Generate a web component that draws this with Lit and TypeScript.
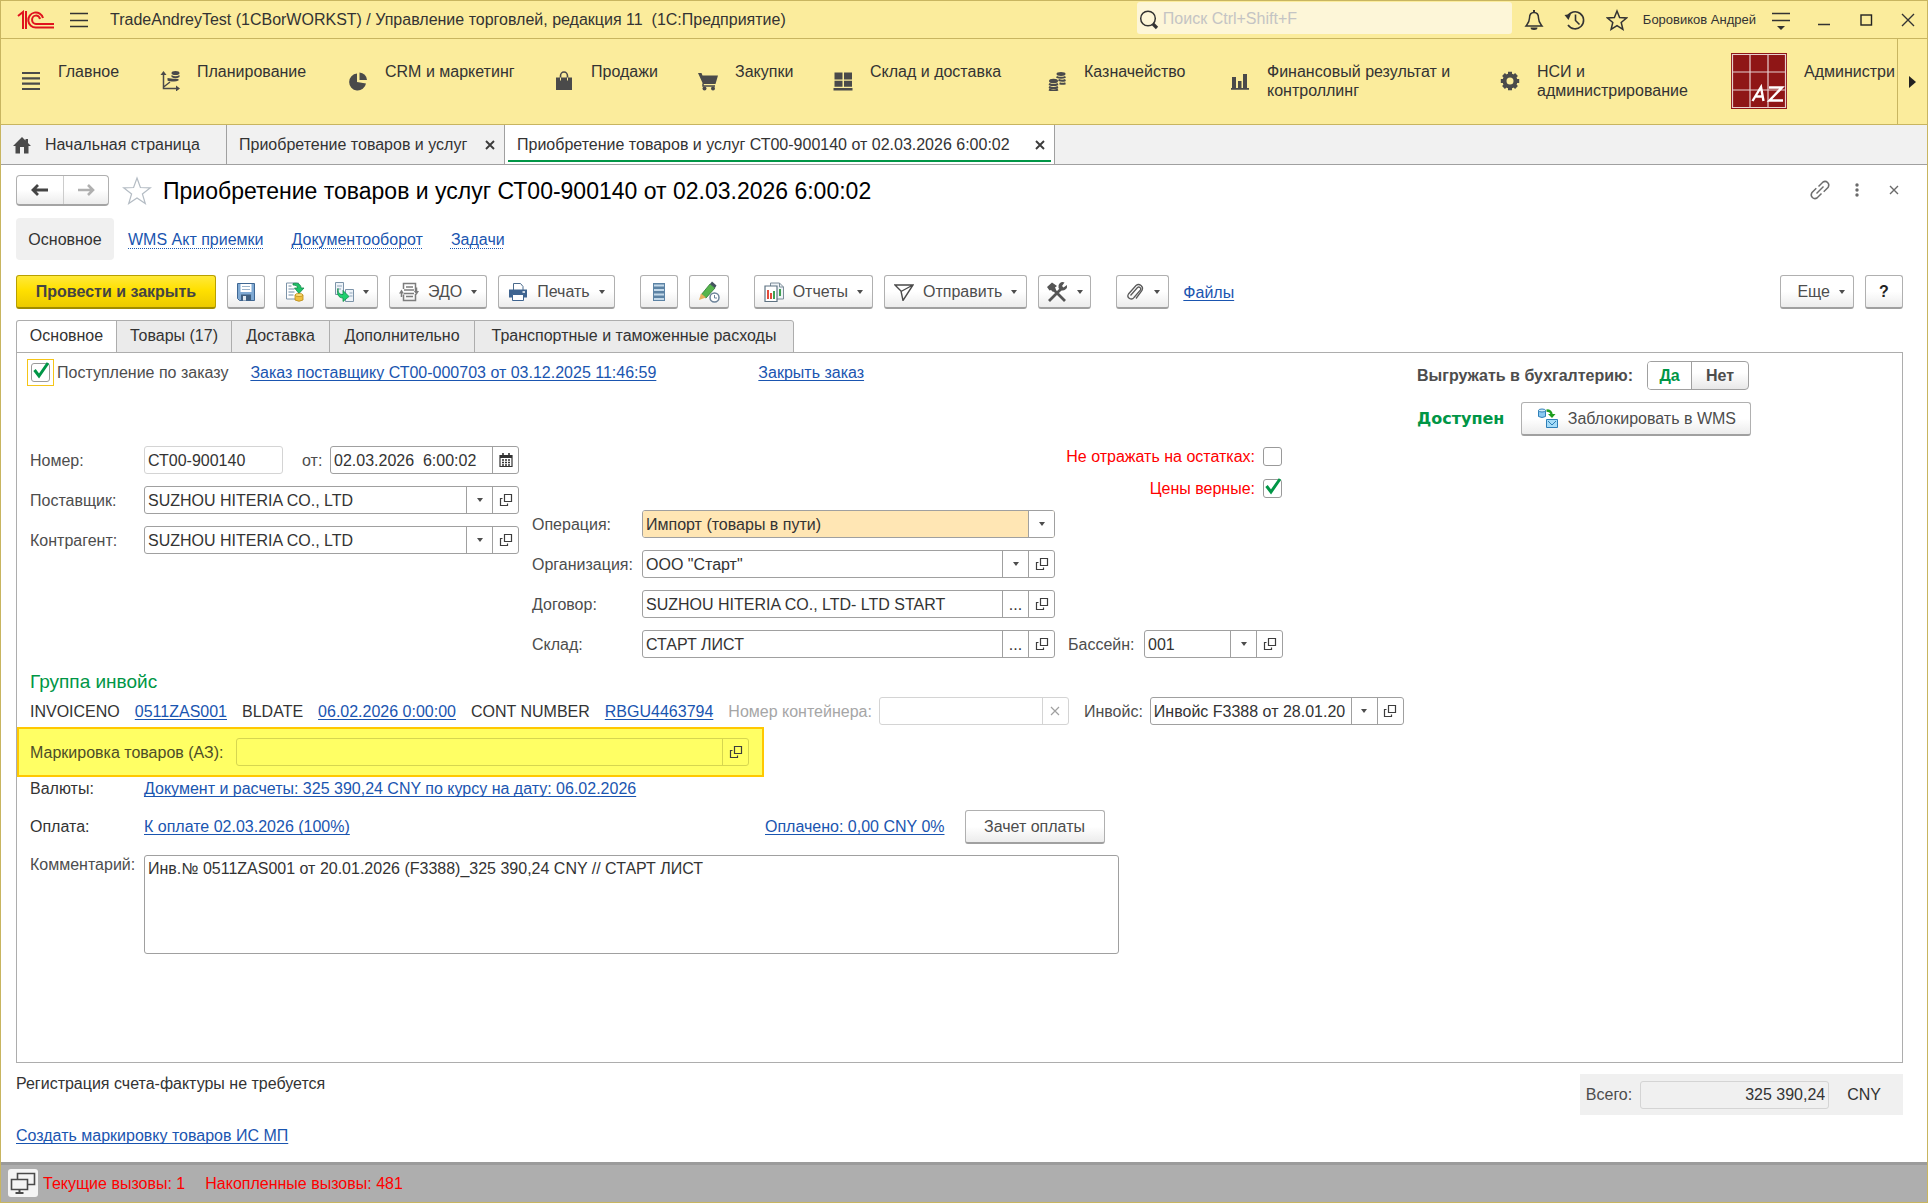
import { LitElement, html, css, svg, nothing } from "lit";
import { customElement, state } from "lit/decorators.js";
import { classMap } from "lit/directives/class-map.js";

const icon = (w: number, h: number, body: unknown) =>
  html`<svg class="icon" width=${w} height=${h} viewBox="0 0 ${w} ${h}" fill="none" aria-hidden="true">${body}</svg>`;

const INK = "#4a4a4a";

const icons = {
  logo: icon(38, 20, svg`<g stroke="#e0141e" stroke-width="2"><path d="M1 6L6 2V19"/><path d="M9 1V19"/><path d="M26 8A7.500 7.500 0 1 0 19 17.500H37"/><path d="M23 9A4 4.200 0 1 0 19 14H37"/></g>`),
  burger: icon(20, 18, svg`<path d="M1 2.500H19M1 9.500H19M1 15.500H19" stroke="#333" stroke-width="1.500"/>`),
  search: icon(22, 22, svg`<circle cx="10" cy="9.500" r="7.300" stroke="#333" stroke-width="1.500"/><path d="M15 15L19 19" stroke="#333" stroke-width="3.200"/>`),
  bell: icon(20, 22, svg`<path d="M10 3.500c-3.500 0-4.500 2.500-4.500 5.500 0 4-1.500 5.500-3.500 8h16c-2-2.500-3.500-4-3.500-8 0-3-1-5.500-4.500-5.500z" stroke="#333" stroke-width="1.500"/><path d="M10 1v3" stroke="#333" stroke-width="2"/><path d="M6.500 18.500h7a3.500 2.500 0 0 1-7 0z" fill="#333"/>`),
  history: icon(22, 22, svg`<path d="M3.500 7.500A8.500 8.500 0 1 1 4 16" stroke="#333" stroke-width="1.600"/><path d="M11.500 5.500v6l4 4" stroke="#333" stroke-width="1.600"/><path d="M0.500 6l6.500-1-2.500 6z" fill="#333"/>`),
  star: icon(22, 22, svg`<path d="M11 2l2.600 6.500 6.900.5-5.300 4.500 1.700 6.800L11 16.600 5.100 20.300l1.700-6.800L1.500 9l6.900-.5z" stroke="#333" stroke-width="1.500"/>`),
  bigStar: icon(30, 30, svg`<path d="M15 2l3.400 9.500 10 .3-8 6.100 2.900 9.700L15 21.900l-8.300 5.700 2.900-9.700-8-6.100 10-.3z" stroke="#b4bcc4" stroke-width="1.200"/>`),
  service: icon(20, 22, svg`<path d="M1 4.500H19M1 11.500H19" stroke="#333" stroke-width="1.600"/><path d="M6 17h8l-4 4z" fill="#333"/>`),
  minimize: icon(16, 16, svg`<path d="M2 12.500H14" stroke="#333" stroke-width="1.500"/>`),
  maximize: icon(16, 16, svg`<rect x="3" y="3" width="10.500" height="10" stroke="#222" stroke-width="1.400"/>`),
  close: icon(16, 16, svg`<path d="M2 2L14 14M14 2L2 14" stroke="#333" stroke-width="1.400"/>`),
  list: icon(20, 20, svg`<path d="M1 2H19M1 7.300H19M1 12.700H19M1 18H19" stroke=${INK} stroke-width="2.200"/>`),
  plan: icon(20, 20, svg`<path d="M3.500 2V17.500H18M3 16.500L10 11" stroke=${INK} stroke-width="1.500"/><path d="M.5 4L3.500 0l3 4zM16 14.500l4 3-4 3z" fill=${INK}/><ellipse cx="15.500" cy="2" rx="4" ry="2" fill=${INK}/><path d="M11.500 4q4 2.500 8 0v2q-4 2.500-8 0zM7.500 7q5 1 11 1v1.500q-2 1-4.500 1-5 0-6.500-1z" fill=${INK}/>`),
  pie: icon(20, 20, svg`<path d="M9 2.500V11l9 1.500A8.500 8.500 0 1 1 9 2.500z" fill=${INK}/><path d="M11.500 1.500A8 8 0 0 1 19 9h-7.500z" fill=${INK}/>`),
  bag: icon(20, 20, svg`<path d="M2 6.500h16V19H2z" fill=${INK}/><path d="M6.500 9V5a3.500 4 0 0 1 7 0v4" stroke=${INK} stroke-width="1.600"/><path d="M6.500 6.500v3M13.500 6.500v3" stroke="#fbec9c" stroke-width="1"/>`),
  cart: icon(20, 20, svg`<path d="M0 2h3.500l1 2.500H20L17.500 13H5z" fill=${INK}/><path d="M5 12.500v2.500h12" stroke=${INK} stroke-width="1.500"/><circle cx="6.500" cy="17.500" r="2" fill=${INK}/><circle cx="15" cy="17.500" r="2" fill=${INK}/>`),
  stock: icon(20, 20, svg`<path d="M1.500 1.500h8v7h-8zM11 1.500h8v7h-8zM1.500 9.800h8v6h-8zM11 9.800h8v6h-8zM.5 17h19v2.500H.5z" fill=${INK}/>`),
  coins: icon(20, 20, svg`<g fill=${INK}><ellipse cx="14" cy="3" rx="4.500" ry="1.900"/><ellipse cx="6.500" cy="10" rx="4.500" ry="2.200"/></g><g stroke=${INK} stroke-width="2"><path d="M9.500 5.800q4.500 2 9 0M11.500 9q4 1.500 7 0M12.500 12.200q3 1.200 6 0M2 13q4.500 2.200 9 0M2 16q4.500 2.200 9 0M2 18.500q4.500 2.200 9 0"/></g>`),
  bars: icon(20, 20, svg`<path d="M2 6h4v11H2zM8 10h3.500v7H8zM13 3h4v14h-4zM1 17h18v1.800H1z" fill=${INK}/>`),
  gear: icon(20, 20, svg`<circle cx="10" cy="10" r="5.500" stroke=${INK} stroke-width="4"/><g stroke=${INK} stroke-width="4"><path d="M10 .8V4M10 16v3.200M.8 10H4M16 10h3.200M3.500 3.500l2 2M14.500 14.500l2 2M16.500 3.500l-2 2M5.500 14.500l-2 2"/></g>`),
  az: html`<svg class="icon" width="56" height="56" viewBox="0 0 56 56" aria-hidden="true"><rect width="56" height="56" fill="#8f1616"/><path d="M1.500 1.500h53v53h-53zM19 2v52M37 2v52M2 19h52M2 37h52" fill="none" stroke="#e8cfcf" stroke-width="1.200"/><path d="M21.500 48L30 34l2.500 14M25 43.500h7.500M38 34.500h13L38.500 47.500H52" fill="none" stroke="#fff" stroke-width="2.400"/></svg>`,
  home: icon(20, 18, svg`<path d="M10 1L1 10h2.500v7.500h4.500V11h4v6.500h4.500V10H19l-3-3V3h-2.500v1.500z" fill=${INK}/>`),
  cross: icon(12, 12, svg`<path d="M2 2l8 8M10 2l-8 8" stroke="#3c3c3c" stroke-width="1.900"/>`),
  thinCross: icon(12, 12, svg`<path d="M2 2l8 8M10 2l-8 8" stroke="#6a6a6a" stroke-width="1.400"/>`),
  paleCross: icon(12, 12, svg`<path d="M2 2l8 8M10 2l-8 8" stroke="#a0a0a0" stroke-width="1.200"/>`),
  back: icon(20, 16, svg`<path d="M8 3L3 8 8 13M3 8H18" stroke="#444" stroke-width="2.800"/>`),
  forward: icon(20, 16, svg`<path d="M12 3l5 5L12 13M17 8H2" stroke="#b0b0b0" stroke-width="2.600"/>`),
  chain: icon(22, 22, svg`<g stroke="#6e6e6e" stroke-width="1.500"><path d="M9.500 7.500L14 3a3.800 3.800 0 0 1 5.200 5.200l-4.500 4.500M12.500 14.500L8 19a3.800 3.800 0 0 1-5.200-5.200L7.300 9.300"/><path d="M7.500 14.500l7-7"/></g>`),
  dots: icon(8, 18, svg`<g fill="#6a6a6a"><circle cx="4" cy="4" r="1.700"/><circle cx="4" cy="9" r="1.700"/><circle cx="4" cy="14" r="1.700"/></g>`),
  right: icon(8, 12, svg`<path d="M0 0l7 6-7 6z" fill="#222"/>`),
  caret: icon(6, 4, svg`<path d="M0 0h6L3 4z" fill="#4d4d4d"/>`),
  save: icon(20, 20, svg`<path d="M1.500 1.500h17v17h-15l-2-2z" fill="#7fa9d3" stroke="#3f6793"/><path d="M4.500 2h11v8h-11z" fill="#fff"/><path d="M6 4.500h8M6 7.500h8" stroke="#9bb4cc"/><path d="M5 12.500h10v6H5z" fill="#3f5f80"/><path d="M7 14h3v4.500H7z" fill="#dfe9f2"/>`),
  post: icon(20, 20, svg`<path d="M1.500 1h12v16h-12z" fill="#fff" stroke="#7c93a8"/><path d="M3.500 4h3M3.500 7h6M3.500 10h6M3.500 13h5" stroke="#6e8ba6"/><path d="M8 1.500c5-1 8 1 8 4.500h3l-5 5.500L9.500 6h3c0-2-1.500-3-4.500-3z" fill="#1fc36a" stroke="#128a48" stroke-width=".8"/><path d="M10 13v5q4 2.500 8 0v-5z" fill="#f0c040" stroke="#b98a17" stroke-width=".8"/><ellipse cx="14" cy="13" rx="4" ry="1.500" fill="#ffe07a" stroke="#b98a17" stroke-width=".8"/>`),
  basedOn: icon(20, 20, svg`<path d="M1.500.500h8v12h-8zM11.500 7.500h8v12h-8z" fill="#eef3f8" stroke="#7c93a8"/><path d="M3 4h5M3 7h4M15.500 11h3M15.500 14h3" stroke="#8ea5ba"/><path d="M4 6.500c0 4.500 1.500 6 5 6V8.500l6 6-6 5v-3.500C4.500 16 2.500 12 4 6.500z" fill="#1fd06e" stroke="#128a48" stroke-width=".8"/>`),
  edo: icon(20, 20, svg`<g stroke="#7d7d7d" stroke-width="1.500"><path d="M4.500 7V1.500h12V10M4.500 12.500v6h12V12"/><path d="M7 5h7M5 8h10M5 11.500h10M7 14.500h7"/><path d="M2.500 15V10M17.500 5.500v5"/></g><path d="M0 11.500l2.500-4 2.500 4zM15 9h5l-2.500 4z" fill="#7d7d7d"/>`),
  print: icon(20, 20, svg`<path d="M5.500 8V1.500h7l2.500 3V8" fill="#fff" stroke="#4a6a8c"/><path d="M1 7.500h18v8H1z" fill="#3f6490"/><path d="M4.500 12.500h11v6h-11z" fill="#fff" stroke="#3f6490"/><path d="M14.500 10h2.500" stroke="#fff" stroke-width="1.500"/>`),
  rows: icon(14, 20, svg`<path d="M1 1h12v18H1z" fill="#5c83a5"/><path d="M2 3.500h10M2 8h10M2 12.500h10M2 17h10" stroke="#c3d9ea" stroke-width="2"/>`),
  pencil: icon(22, 22, svg`<path d="M3 14L12 3l5 4-9 10z" fill="#57b54c" stroke="#2c7a33" stroke-width=".8"/><path d="M12 3l2-2.500 4.500 4L17 7z" fill="#42525e"/><path d="M1 19l2-6.500 5 4z" fill="#e8b060"/><circle cx="16.500" cy="16.500" r="4.500" fill="#fff" stroke="#6b8299" stroke-width="1.500"/><path d="M16.500 14v3h2.500" stroke="#6b8299"/>`),
  report: icon(20, 20, svg`<path d="M6.500 1h9l4 4v12h-13z" fill="#eef3f6" stroke="#7c8c99"/><path d="M15.500 1v4h4" stroke="#7c8c99"/><path d="M1 4h12v15.500H1z" fill="#fff" stroke="#5e7282" stroke-width="1.200"/><path d="M4 8v9" stroke="#e24b3b" stroke-width="2"/><path d="M7 11v6" stroke="#e24b3b" stroke-width="2"/><path d="M10 9v8M16 7v7" stroke="#3fa052" stroke-width="2"/>`),
  send: icon(20, 18, svg`<path d="M1 2h18L9 17.500 7 8zM7 8.500L18 2.500" stroke="#4a4a4a" stroke-width="1.400"/>`),
  tools: icon(22, 22, svg`<path d="M3 20L16 7M7 8l12 12" stroke="#555" stroke-width="2.800"/><path d="M1 6l5-4.500 5 3.500-2 1.500 1 2-3 2.500-2-2-1.500.5z" fill="#555"/><path d="M18.500 1.500L16 5l1.500 1.500 3.500-2.500a4.500 4.500 0 0 1-6.500 5l-2-2a4.500 4.500 0 0 1 6-5.500z" fill="#555"/>`),
  clip: icon(20, 20, svg`<path d="M5.500 13.500l7-8a2 2 0 0 1 3 2.500L9 15.500a3.200 3.200 0 0 1-5.500-3.500l7.500-8.500a4 4 0 0 1 6 5l-6 8" stroke="#5a5a5a" stroke-width="1.300"/>`),
  lock: icon(22, 20, svg`<path d="M1.500 2.500v6q3.500 2 7 0v-6z" fill="#8ccaf2" stroke="#2f7fb8"/><ellipse cx="5" cy="2.500" rx="3.500" ry="1.500" fill="#d2ecfb" stroke="#2f7fb8"/><path d="M9.500 2.500c3.500 0 5 1.500 5 4" stroke="#1e9e1e" stroke-width="2.400"/><path d="M11 6h7.500L15 10z" fill="#1e9e1e"/><path d="M9.500 11.500h11v8h-11z" fill="#a6dcf8" stroke="#2f7fb8"/><path d="M11 13l4 4 4-4" stroke="#2f7fb8"/>`),
  calendar: icon(14, 14, svg`<path d="M1 2.500h12v11H1z" stroke="#333" stroke-width="1.200"/><path d="M1 2h12v3H1z" fill="#333"/><path d="M4 0v3M10 0v3" stroke="#333" stroke-width="1.600"/><path d="M3 7h8M3 9.500h8M3 12h8" stroke="#333" stroke-width="1.500" stroke-dasharray="2 1"/>`),
  open: icon(14, 14, svg`<path d="M5.500 1.500h7v7h-7z" stroke="#3c3c3c" stroke-width="1.200"/><path d="M3.500 5.500h-2v7h7v-2" stroke="#3c3c3c" stroke-width="1.200"/>`),
  check: icon(19, 19, svg`<path d="M3.500 7L8 13 17 0" stroke="#009646" stroke-width="3"/>`),
  screens: icon(26, 24, svg`<g fill="#f4f4f4" stroke="#4a4a4a" stroke-width="1.600"><path d="M7.500 2.500h17v11h-17z"/><path d="M1.500 8.500h16v10h-16z"/></g><path d="M9.500 18v4M5.500 22h8" stroke="#4a4a4a" stroke-width="2"/>`),
};

const SECTIONS = [
  { icon: icons.list, lines: ["Главное"] },
  { icon: icons.plan, lines: ["Планирование"] },
  { icon: icons.pie, lines: ["CRM и маркетинг"] },
  { icon: icons.bag, lines: ["Продажи"] },
  { icon: icons.cart, lines: ["Закупки"] },
  { icon: icons.stock, lines: ["Склад и доставка"] },
  { icon: icons.coins, lines: ["Казначейство"] },
  { icon: icons.bars, lines: ["Финансовый результат и", "контроллинг"] },
  { icon: icons.gear, lines: ["НСИ и", "администрирование"] },
  { icon: icons.az, lines: ["Администри"] },
];

const PAGES = ["Основное", "Товары (17)", "Доставка", "Дополнительно", "Транспортные и таможенные расходы"];

@customElement("app-root")
export class AppRoot extends LitElement {
  @state() private page = 0;

  static styles = css`
    :host {
      display: flex;
      flex-direction: column;
      box-sizing: border-box;
      min-height: 100vh;
      border: 1px solid #c8b560;
      background: #fff;
      color: #333;
      font: 16px/19px "Liberation Sans", Arial, sans-serif;
    }
    * { box-sizing: border-box; }
    button, input, select, textarea { font: inherit; color: inherit; margin: 0; }
    button { background: none; border: 0; padding: 0; white-space: nowrap; }
    .icon { display: block; flex: none; }
    a { color: #1a55b0; text-decoration: underline 1px; text-underline-offset: 2px; text-decoration-skip-ink: none; white-space: nowrap; }
    label { color: #4d4d4d; white-space: nowrap; }

    .titlebar { display: flex; align-items: center; height: 38px; padding: 0 11px 0 16px; background: #fbec9c; border-bottom: 1px solid #c8b560; }
    .burger { margin: 0 21px 0 14px; }
    .app-name { flex: 1; white-space: pre; overflow: hidden; }
    .search { display: flex; align-items: center; width: 375px; height: 32px; margin: 0 12px 3px 0; padding-left: 1px; background: #fdf6d8; border-radius: 3px; }
    .search .icon { margin-top: 3px; }
    .search input { flex: 1; min-width: 0; border: 0; background: none; padding: 0 3px; outline: 0; }
    .search input::placeholder { color: #c4c4c4; opacity: 1; }
    .tools { display: flex; align-items: center; gap: 20px; }
    .user { font-size: 13px; margin: 0 -5px; }
    .window { display: flex; gap: 26px; margin-left: 25px; }

    .sections { display: flex; height: 86px; background: #fbec9c; border-bottom: 1px solid #c8b560; }
    .section-list { display: grid; grid-template-columns: 139px 188px 206px 144px 135px 214px 183px 270px 231px 166px; flex: 1; min-width: 0; padding: 0 0 2px 20px; overflow: hidden; }
    .section { display: flex; align-items: center; gap: 17px; text-align: left; }
    .section-name { align-self: flex-start; padding-top: 23px; }
    .section-name span { display: block; }
    .scroll { display: grid; place-items: center; width: 30px; border-left: 1px solid #c8b560; }

    .windows { display: grid; grid-template-columns: 226px 278px 550px; height: 40px; background: #f1f1f1; border-bottom: 1px solid #a0a0a0; }
    .window-tab { display: flex; align-items: center; justify-content: space-between; padding: 0 8px 0 12px; border-right: 1px solid #a0a0a0; }
    .window-tab.first { justify-content: flex-start; padding: 0 0 0 11px; gap: 13px; }
    .window-tab.current { position: relative; background: #fff; }
    .window-tab.current::after { content: ""; position: absolute; left: 3px; right: 3px; bottom: 2px; height: 2px; background: #009646; }

    main { display: flex; flex-direction: column; flex: 1; padding: 10px 24px 0 15px; }
    .heading { display: flex; align-items: center; height: 31px; }
    .history { display: flex; height: 31px; border: 1px solid #b0b0b0; border-bottom: 2px solid #a4a4a4; border-radius: 4px; background: linear-gradient(#fff 50%, #ececec); }
    .history button { display: grid; place-items: center; width: 46px; }
    .history button + button { width: 45px; border-left: 1px solid #ccc; }
    .favorite { margin: 0 11px 0 13px; }
    h1 { flex: 1; margin: 0; font-size: 23px; line-height: 26px; font-weight: 400; color: #000; white-space: nowrap; }
    .heading-tools { display: flex; align-items: center; gap: 22px; padding: 0 3px 2px 0; }
    .heading-tools .dots { margin-right: 5px; }

    .links { display: flex; align-items: center; gap: 28px; height: 42px; margin-top: 12px; }
    .links .here { display: flex; align-items: center; justify-content: center; min-width: 98px; height: 42px; padding: 0 12px; margin-right: -14px; background: #f0f0f0; border-radius: 4px; }
    .links a { text-decoration-style: dotted; text-underline-offset: 3px; }

    .bar { display: flex; align-items: center; gap: 11px; margin-top: 15px; }
    .bar .gap { width: 3px; }
    .bar .spring { flex: 1; }
    .bar a { margin-left: 3px; }
    .btn { display: flex; align-items: center; justify-content: center; gap: 9px; height: 34px; min-width: 38px; padding: 0 8px; border: 1px solid #b0b0b0; border-bottom: 2px solid #a0a0a0; border-radius: 3px; background: linear-gradient(#fff 50%, #ececec); color: #4d4d4d; }
    .btn.primary { min-width: 200px; font-weight: 700; color: #444; background: linear-gradient(#ffe93a, #ffe000 45%, #ecca00); border-color: #b8a000 #b8a000 #a08c00; }
    .btn.plain { min-width: 140px; }
    .btn.wide { padding: 0 8px 0 16px; }
    .btn.help { font-weight: 700; color: #222; }
    .btn.menu { padding: 0 9px; }
    .btn.icon-menu { padding: 0 7px; min-width: 53px; }

    .pages { display: grid; grid-template-columns: 101px 115px 98px 145px 319px; margin-top: 11px; }
    .page { height: 33px; margin: 0 0 -1px -1px; padding: 0 0 3px; border: 1px solid #adadad; background: #ebebeb; }
    .page:first-child { margin-left: 0; border-top-left-radius: 3px; }
    .page:last-child { border-top-right-radius: 3px; }
    .page.current { background: #fff; border-bottom-color: #fff; }

    .panel { flex: 1; padding: 6px 0 24px; border: 1px solid #adadad; }
    .row { display: flex; align-items: center; }
    .top { display: flex; height: 75px; padding-left: 10px; }
    .order { display: flex; align-items: center; flex: 0 1 1390px; height: 27px; }
    .focus { border: 1px solid #f5c518; padding: 3px; margin-right: 3px; }
    .order a:first-of-type { margin: 0 102px 0 22px; }
    .tick { display: grid; width: 19px; height: 19px; }
    .tick > * { grid-area: 1 / 1; }
    .tick input { appearance: none; width: 19px; height: 19px; border: 1px solid #9a9a9a; border-radius: 3px; background: #fff; }
    .tick .icon { pointer-events: none; overflow: visible; }
    .accounting { display: flex; flex-direction: column; align-items: flex-start; gap: 12px; padding-top: 2px; }
    .accounting .row { gap: 14px; height: 29px; }
    .accounting .row.wms { gap: 17px; height: 33px; }
    .accounting .btn { min-width: 230px; }
    .bold { font-weight: 700; }
    .switch { display: flex; height: 29px; border: 1px solid #a0a0a0; border-radius: 4px; background: linear-gradient(#fff 40%, #e8e8e8); overflow: hidden; }
    .switch label { display: flex; align-items: center; justify-content: center; width: 56px; font-weight: 700; }
    .switch label.on { width: 44px; background: #fff; color: #009646; border-right: 1px solid #a0a0a0; }
    .switch input { appearance: none; width: 0; height: 0; }
    .ready { font: 700 16px/19px "DejaVu Sans", Verdana, sans-serif; color: #009646; }

    .form { display: flex; gap: 13px; margin-top: 12px; padding-left: 13px; }
    .column { display: flex; flex-direction: column; gap: 12px; }
    .left label { width: 114px; }
    .left { width: 489px; }
    .left label.mid { width: 47px; padding-left: 19px; }
    .right { width: 751px; padding-top: 1px; }
    .right .row > label { width: 110px; }
    .right .row > label.pool { width: 76px; }
    .right .pool { margin-left: 13px; }
    .right .warn { justify-content: flex-end; gap: 8px; height: 19px; margin-bottom: 1px; padding-right: 1px; }
    .right .warn + .warn { margin-bottom: 0; }
    .right .warn > label { width: auto; color: #f00; }

    .field { display: grid; grid-template-columns: minmax(0, 1fr); grid-auto-columns: 26px; grid-auto-flow: column; height: 28px; border: 1px solid #a0a0a0; border-radius: 3px; background: #fff; }
    .field input, .field select { grid-row: 1; min-width: 0; width: 100%; border: 0; padding: 0 3px; outline: 0; background: none; appearance: none; border-radius: 2px; }
    .field select { grid-column: 1 / span 2; padding-right: 29px; text-overflow: clip; }
    .field .cell { grid-row: 1; display: grid; place-items: center; border-left: 1px solid #a0a0a0; }
    .field .drop { grid-column: 2; pointer-events: none; background: #fff; border-radius: 0 2px 2px 0; }
    .field.pale, .field.pale .cell { border-color: #d4d4d4; }
    .field.accent select { background: #ffe6b4; }
    .grow { flex: 1; }
    .w138 { width: 139px; }
    .w190 { width: 190px; }
    .w254 { width: 254px; }
    .w412 { width: 413px; }
    .w513 { width: 513px; }

    h2 { margin: 13px 0 4px; padding-left: 13px; font-size: 19px; line-height: 22px; font-weight: 400; color: #009646; }
    .invoice { gap: 15px; padding-left: 13px; height: 28px; white-space: nowrap; }
    .invoice label { margin-right: -8px; }
    .invoice .off { color: #a6a6a6; }
    .marking { width: 747px; height: 50px; margin-top: 2px; padding-left: 11px; border: 2px solid #ffc800; background: #ffff64; }
    .marking label { width: 206px; color: #4d4d28; }
    .marking .field, .marking .field .cell { background: none; border-color: #d6d650; }
    .line { margin-top: 2px; padding-left: 13px; }
    .line > .name { width: 114px; }
    .pay { height: 33px; margin-top: 12px; }
    .pay .due { width: 621px; }
    .pay .btn { margin-left: 20px; }
    .comment { align-items: flex-start; margin-top: 12px; }
    .comment textarea { display: block; width: 975px; height: 99px; padding: 3px; border: 1px solid #a0a0a0; border-radius: 3px; resize: none; outline: 0; }

    .bottom { display: flex; justify-content: space-between; align-items: flex-start; padding: 11px 0 17px; }
    .notes { display: flex; flex-direction: column; align-items: flex-start; gap: 33px; }
    .total { display: flex; align-items: center; height: 41px; padding: 0 22px 0 6px; background: #f0f0f0; }
    .total .field { width: 189px; margin: 0 18px 0 8px; background: #f0f0f0; }
    .total input { text-align: right; }

    .status { display: flex; align-items: center; gap: 5px; height: 40px; padding: 0 0 1px 7px; background: #aeaeae; border-top: 3px solid #9b9b9b; color: #f00; }
    .screens { display: grid; place-items: center; width: 30px; height: 28px; border-radius: 3px; background: #f4f4f4; }
    .calls { margin-right: 15px; }
  `;

  private menu(glyph: unknown, text: string) {
    return html`<button class=${classMap({ btn: true, menu: !!text, "icon-menu": !text })} aria-label=${text || "Меню"}>${glyph}${text ? html`<span>${text}</span>` : nothing}${icons.caret}</button>`;
  }

  private choice(id: string, value: string, width: string, opens = true, accent = false) {
    return html`<div class="field ${width} ${accent ? "accent" : ""}">
      <select id=${id}><option>${value}</option></select>
      <span class="cell drop">${icons.caret}</span>
      ${opens ? html`<button class="cell" aria-label="Открыть">${icons.open}</button>` : nothing}
    </div>`;
  }

  private lookup(id: string, value: string) {
    return html`<div class="field w412">
      <input id=${id} .value=${value} />
      <button class="cell" aria-label="Выбрать">...</button>
      <button class="cell" aria-label="Открыть">${icons.open}</button>
    </div>`;
  }

  private tick(id: string, on: boolean) {
    return html`<span class="tick"><input type="checkbox" id=${id} ?checked=${on} />${on ? icons.check : nothing}</span>`;
  }

  render() {
    return html`
      <header class="titlebar">
        ${icons.logo}
        <button class="burger" aria-label="Главное меню">${icons.burger}</button>
        <span class="app-name">TradeAndreyTest (1CBorWORKST) / Управление торговлей, редакция 11  (1С:Предприятие)</span>
        <div class="search">${icons.search}<input type="search" aria-label="Поиск" placeholder="Поиск Ctrl+Shift+F" /></div>
        <div class="tools">
          <button aria-label="Оповещения">${icons.bell}</button>
          <button aria-label="История">${icons.history}</button>
          <button aria-label="Избранное">${icons.star}</button>
          <span class="user">Боровиков Андрей</span>
          <button aria-label="Сервис">${icons.service}</button>
        </div>
        <div class="window">
          <button aria-label="Свернуть">${icons.minimize}</button>
          <button aria-label="Развернуть">${icons.maximize}</button>
          <button aria-label="Закрыть">${icons.close}</button>
        </div>
      </header>

      <nav class="sections">
        <div class="section-list">
          ${SECTIONS.map((s) => html`<button class="section">${s.icon}<span class="section-name">${s.lines.map((l) => html`<span>${l}</span>`)}</span></button>`)}
        </div>
        <button class="scroll" aria-label="Дальше">${icons.right}</button>
      </nav>

      <nav class="windows">
        <button class="window-tab first">${icons.home}<span>Начальная страница</span></button>
        <button class="window-tab"><span>Приобретение товаров и услуг</span>${icons.cross}</button>
        <button class="window-tab current"><span>Приобретение товаров и услуг СТ00-900140 от 02.03.2026 6:00:02</span>${icons.cross}</button>
      </nav>

      <main>
        <div class="heading">
          <div class="history">
            <button aria-label="Назад">${icons.back}</button>
            <button aria-label="Вперед">${icons.forward}</button>
          </div>
          <button class="favorite" aria-label="В избранное">${icons.bigStar}</button>
          <h1>Приобретение товаров и услуг СТ00-900140 от 02.03.2026 6:00:02</h1>
          <div class="heading-tools">
            <button aria-label="Ссылка">${icons.chain}</button>
            <button class="dots" aria-label="Еще">${icons.dots}</button>
            <button aria-label="Закрыть">${icons.thinCross}</button>
          </div>
        </div>

        <nav class="links">
          <span class="here">Основное</span>
          <a href="#wms">WMS Акт приемки</a>
          <a href="#docs">Документооборот</a>
          <a href="#tasks">Задачи</a>
        </nav>

        <div class="bar">
          <button class="btn primary">Провести и закрыть</button>
          <button class="btn" aria-label="Записать">${icons.save}</button>
          <button class="btn" aria-label="Провести">${icons.post}</button>
          ${this.menu(icons.basedOn, "")}
          ${this.menu(icons.edo, "ЭДО")}
          ${this.menu(icons.print, "Печать")}
          <span class="gap"></span>
          <button class="btn" aria-label="Список">${icons.rows}</button>
          <button class="btn" aria-label="Изменения">${icons.pencil}</button>
          <span class="gap"></span>
          ${this.menu(icons.report, "Отчеты")}
          ${this.menu(icons.send, "Отправить")}
          ${this.menu(icons.tools, "")}
          <span class="gap"></span>
          ${this.menu(icons.clip, "")}
          <a href="#files">Файлы</a>
          <span class="spring"></span>
          <button class="btn wide">Еще ${icons.caret}</button>
          <button class="btn help">?</button>
        </div>

        <div class="pages" role="tablist">
          ${PAGES.map((p, i) => html`<button role="tab" aria-selected=${i === this.page} class=${classMap({ page: true, current: i === this.page })} @click=${() => (this.page = i)}>${p}</button>`)}
        </div>

        <section class="panel">
          <div class="top">
            <div class="order">
              <span class="focus">${this.tick("by-order", true)}</span>
              <label for="by-order">Поступление по заказу</label>
              <a href="#order">Заказ поставщику СТ00-000703 от 03.12.2025 11:46:59</a>
              <a href="#close-order">Закрыть заказ</a>
            </div>
            <div class="accounting">
              <div class="row" role="radiogroup" aria-labelledby="export">
                <label class="bold" id="export">Выгружать в бухгалтерию:</label>
                <div class="switch">
                  <label class="on"><input type="radio" name="export" checked />Да</label>
                  <label><input type="radio" name="export" />Нет</label>
                </div>
              </div>
              <div class="row wms">
                <span class="ready">Доступен</span>
                <button class="btn">${icons.lock}<span>Заблокировать в WMS</span></button>
              </div>
            </div>
          </div>

          <div class="form">
            <div class="column left">
              <div class="row">
                <label for="number">Номер:</label>
                <div class="field pale w138"><input id="number" .value=${"СТ00-900140"} /></div>
                <label class="mid" for="date">от:</label>
                <div class="field grow"><input id="date" .value=${"02.03.2026  6:00:02"} /><button class="cell" aria-label="Календарь">${icons.calendar}</button></div>
              </div>
              <div class="row"><label for="supplier">Поставщик:</label>${this.choice("supplier", "SUZHOU HITERIA CO., LTD", "grow")}</div>
              <div class="row"><label for="partner">Контрагент:</label>${this.choice("partner", "SUZHOU HITERIA CO., LTD", "grow")}</div>
            </div>
            <div class="column right">
              <div class="row warn"><label for="no-stock">Не отражать на остатках:</label>${this.tick("no-stock", false)}</div>
              <div class="row warn"><label for="prices">Цены верные:</label>${this.tick("prices", true)}</div>
              <div class="row"><label for="operation">Операция:</label>${this.choice("operation", "Импорт (товары в пути)", "w412", false, true)}</div>
              <div class="row"><label for="company">Организация:</label>${this.choice("company", 'ООО "Старт"', "w412")}</div>
              <div class="row"><label for="contract">Договор:</label>${this.lookup("contract", "SUZHOU HITERIA CO., LTD- LTD START")}</div>
              <div class="row">
                <label for="store">Склад:</label>${this.lookup("store", "СТАРТ ЛИСТ")}
                <label class="pool" for="pool">Бассейн:</label>${this.choice("pool", "001", "grow")}
              </div>
            </div>
          </div>

          <h2>Группа инвойс</h2>
          <div class="row invoice">
            <span>INVOICENO</span><a href="#invoice-no">0511ZAS001</a>
            <span>BLDATE</span><a href="#bl-date">06.02.2026 0:00:00</a>
            <span>CONT NUMBER</span><a href="#container">RBGU4463794</a>
            <label class="off" for="cont">Номер контейнера:</label>
            <div class="field pale w190"><input id="cont" disabled /><button class="cell" aria-label="Очистить" disabled>${icons.paleCross}</button></div>
            <label for="invoice">Инвойс:</label>
            ${this.choice("invoice", "Инвойс F3388 от 28.01.20", "w254")}
          </div>
          <div class="row marking">
            <label for="marking">Маркировка товаров (АЗ):</label>
            <div class="field w513"><input id="marking" /><button class="cell" aria-label="Открыть">${icons.open}</button></div>
          </div>
          <div class="row line"><span class="name">Валюты:</span><a href="#currency">Документ и расчеты: 325 390,24 CNY по курсу на дату: 06.02.2026</a></div>
          <div class="row line pay">
            <span class="name">Оплата:</span>
            <span class="due"><a href="#due">К оплате 02.03.2026 (100%)</a></span>
            <a href="#paid">Оплачено: 0,00 CNY 0%</a>
            <button class="btn plain">Зачет оплаты</button>
          </div>
          <div class="row line comment">
            <label class="name" for="comment">Комментарий:</label>
            <textarea id="comment" .value=${"Инв.№ 0511ZAS001 от 20.01.2026 (F3388)_325 390,24 CNY // СТАРТ ЛИСТ"}></textarea>
          </div>
        </section>

        <footer class="bottom">
          <div class="notes">
            <span>Регистрация счета-фактуры не требуется</span>
            <a href="#create-marking">Создать маркировку товаров ИС МП</a>
          </div>
          <div class="total">
            <label for="total">Всего:</label>
            <div class="field pale"><input id="total" readonly .value=${"325 390,24"} /></div>
            <span>CNY</span>
          </div>
        </footer>
      </main>

      <div class="status">
        <button class="screens" aria-label="Окна">${icons.screens}</button>
        <span class="calls">Текущие вызовы: 1</span>
        <span>Накопленные вызовы: 481</span>
      </div>
    `;
  }
}
